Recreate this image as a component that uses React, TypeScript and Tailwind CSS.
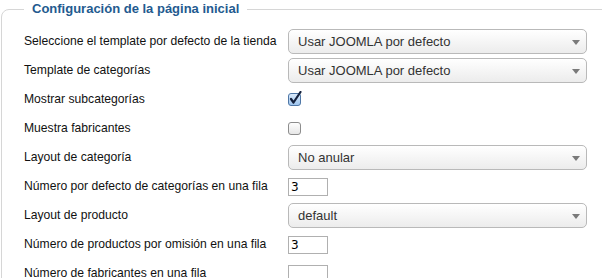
import React from "react";

function Select({ value }: { value: string }) {
  return (
    <div className="relative flex h-[25px] w-[299px] items-center rounded-[5px] border border-[#b9b9b9] bg-gradient-to-b from-[#ffffff] to-[#ececec] pl-[9px] text-[13px] text-[#333]">
      <span>{value}</span>
      <svg className="absolute right-[6px] top-[10px]" width="8" height="5" viewBox="0 0 8 5">
        <path d="M0 0 L8 0 L4 5 Z" fill="#7a7a7a" />
      </svg>
    </div>
  );
}

function NumInput({ value }: { value: string }) {
  return (
    <div className="flex h-[18px] w-[40px] items-center border border-[#b0b0b0] bg-white pl-[2px] text-[12px] text-black [font-family:'DejaVu_Sans',sans-serif]">
      {value}
    </div>
  );
}

function Checked() {
  return (
    <svg width="15" height="15" viewBox="0 0 15 15" className="-mt-[2px]">
      <defs>
        <linearGradient id="cb" x1="0" y1="0" x2="0" y2="1">
          <stop offset="0" stopColor="#dcebfb" />
          <stop offset="1" stopColor="#9cc4ee" />
        </linearGradient>
      </defs>
      <rect x="0.5" y="2.5" width="12" height="12" rx="2.5" fill="url(#cb)" stroke="#4f77a6" />
      <path d="M3 8 L5.5 11.5 L12.5 1" fill="none" stroke="#14213d" strokeWidth="2.2" strokeLinecap="round" strokeLinejoin="round" />
    </svg>
  );
}

function Unchecked() {
  return (
    <svg width="13" height="13" viewBox="0 0 13 13">
      <defs>
        <linearGradient id="ub" x1="0" y1="0" x2="0" y2="1">
          <stop offset="0" stopColor="#ffffff" />
          <stop offset="1" stopColor="#e6e6e6" />
        </linearGradient>
      </defs>
      <rect x="0.5" y="0.5" width="12" height="12" rx="2.5" fill="url(#ub)" stroke="#8d8d8d" />
    </svg>
  );
}

function Row({ label, children }: { label: string; children: React.ReactNode }) {
  return (
    <div className="flex h-[29px] items-center">
      <div className="w-[264px] shrink-0 whitespace-nowrap text-[12.15px] text-[#111]">{label}</div>
      <div className="flex items-center">{children}</div>
    </div>
  );
}

export default function App() {
  return (
    <div className="h-[278px] w-[602px] overflow-hidden bg-white [font-family:'Liberation_Sans',Arial,sans-serif]">
      <fieldset className="ml-[1px] w-[640px] rounded-tl-[8px] border border-[#d6d6d6] pb-[20px] pl-[22px]">
        <legend className="px-[8px] text-[13px] font-bold leading-[18px] text-[#235a8f]">
          Configuración de la página inicial
        </legend>
        <div className="flex flex-col pt-[9px]">
          <Row label="Seleccione el template por defecto de la tienda">
            <Select value="Usar JOOMLA por defecto" />
          </Row>
          <Row label="Template de categorías">
            <Select value="Usar JOOMLA por defecto" />
          </Row>
          <Row label="Mostrar subcategorías">
            <Checked />
          </Row>
          <Row label="Muestra fabricantes">
            <Unchecked />
          </Row>
          <Row label="Layout de categoría">
            <Select value="No anular" />
          </Row>
          <Row label="Número por defecto de categorías en una fila">
            <NumInput value="3" />
          </Row>
          <Row label="Layout de producto">
            <Select value="default" />
          </Row>
          <Row label="Número de productos por omisión en una fila">
            <NumInput value="3" />
          </Row>
          <Row label="Número de fabricantes en una fila">
            <NumInput value="" />
          </Row>
        </div>
      </fieldset>
    </div>
  );
}
